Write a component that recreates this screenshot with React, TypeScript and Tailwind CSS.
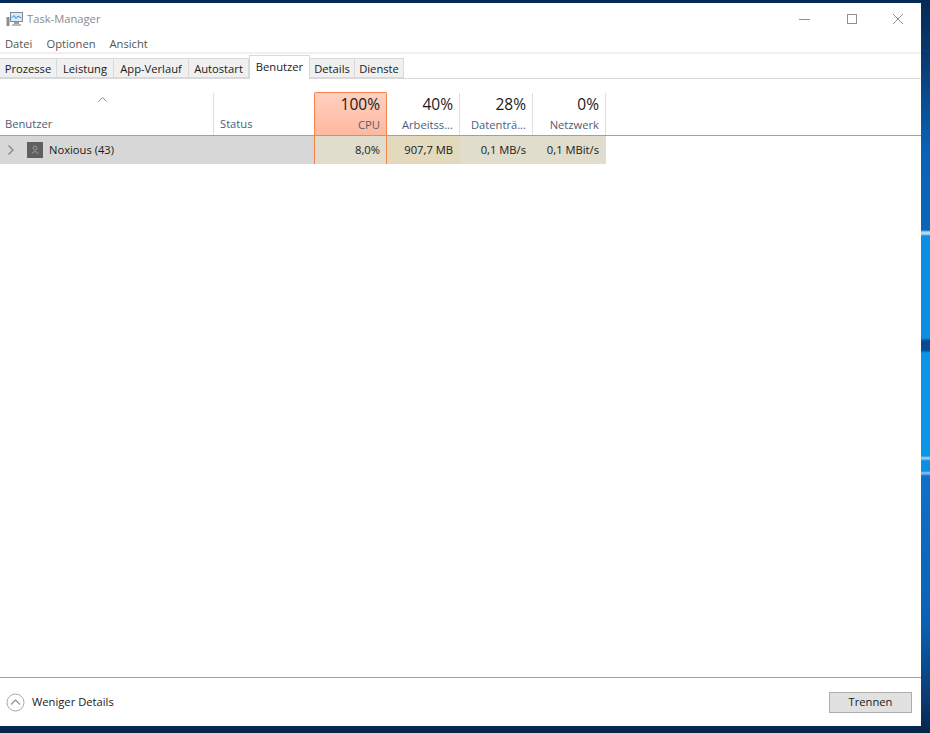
const font = { fontFamily: '"Open Sans", "Noto Sans", sans-serif' }

const tabs = [
  { label: 'Prozesse', width: 'w-[57px]' },
  { label: 'Leistung', width: 'w-[57px]' },
  { label: 'App-Verlauf', width: 'w-[75px]' },
  { label: 'Autostart', width: 'w-[60px]' },
  { label: 'Benutzer', width: 'w-[61px]', active: true },
  { label: 'Details', width: 'w-[45px]' },
  { label: 'Dienste', width: 'w-[49px]' },
]

const columns = [
  { percent: '40%', name: 'Arbeitss...', value: '907,7 MB', cell: 'bg-[#e3d9bd]' },
  { percent: '28%', name: 'Datenträ...', value: '0,1 MB/s', cell: 'bg-[#e0ddcc]' },
  { percent: '0%', name: 'Netzwerk', value: '0,1 MBit/s', cell: 'bg-[#e0ddcc]' },
]

function AppIcon() {
  return (
    <svg width="17" height="16" viewBox="0 0 17 16" className="shrink-0">
      <rect x="0.5" y="6" width="3" height="9" fill="#8a8f94" />
      <rect x="4.5" y="1.5" width="12" height="9" fill="#dcebf5" stroke="#7f8a93" />
      <path d="M5.5 7 L8 4.5 L10 7.5 L12 5 L15.5 7" fill="none" stroke="#2f8fd0" strokeWidth="1" />
      <rect x="8" y="11" width="5" height="2" fill="#9aa0a5" />
      <rect x="6" y="13" width="9" height="2" fill="#b5babd" />
    </svg>
  )
}

export default function App() {
  return (
    <div
      className="flex h-[733px] w-[930px] items-start overflow-hidden bg-[linear-gradient(180deg,#062a55_0px,#0a3a70_60px,#0a62b5_150px,#0a66bb_230px,#b5d8ee_232px,#b5d8ee_234px,#0a8fe2_236px,#0a8fe2_338px,#0a4a90_341px,#0a4a90_350px,#0a96e8_353px,#0a96e8_456px,#b5d8ee_458px,#0a8fe2_461px,#0a8fe2_471px,#9cc8e8_473px,#1070c8_476px,#0a62b5_620px,#0a3a70_700px,#062448_733px)] pt-[3px] text-[11.2px] text-[#1a1a1a]"
      style={font}
    >
      <div className="flex h-[723px] w-[921px] flex-col bg-white">
        <div className="flex h-[32px] shrink-0 items-center pl-[6px]">
          <AppIcon />
          <span className="ml-[4px] text-[#8b8b8b]">Task-Manager</span>
          <div className="ml-auto flex items-center">
            <svg width="12" height="12" viewBox="0 0 12 12" className="mr-[35px]">
              <path d="M0 6.5 H11" stroke="#8f8f8f" />
            </svg>
            <svg width="12" height="12" viewBox="0 0 12 12" className="mr-[34px]">
              <rect x="1.5" y="1.5" width="9" height="9" fill="none" stroke="#8f8f8f" />
            </svg>
            <svg width="12" height="12" viewBox="0 0 12 12" className="mr-[17px]">
              <path d="M1 1 L11 11 M11 1 L1 11" stroke="#8f8f8f" />
            </svg>
          </div>
        </div>
        <div className="flex h-[17px] shrink-0 items-center gap-[14px] pl-[5px] pt-[2px] text-[#555]">
          <span>Datei</span>
          <span>Optionen</span>
          <span>Ansicht</span>
        </div>
        <div className="h-[2px] shrink-0 bg-[#f0f0f0]" />
        <div className="relative flex h-[25px] shrink-0 items-end border-b border-[#d9d9d9]">
          {tabs.map((tab) =>
            tab.active ? (
              <div
                key={tab.label}
                className={`${tab.width} relative z-10 -mb-px flex h-[24px] items-start justify-center border border-b-0 border-[#d9d9d9] bg-white pt-[3px]`}
              >
                {tab.label}
              </div>
            ) : (
              <div
                key={tab.label}
                className={`${tab.width} flex h-[20px] items-center justify-center border-y border-r border-[#d9d9d9] bg-[#f0f0f0] pt-[2px]`}
              >
                {tab.label}
              </div>
            ),
          )}
        </div>
        <div className="flex flex-1 flex-col">
          <div className="flex h-[57px] shrink-0 items-end border-b border-[#a0a0a0] pt-[14px]">
            <div className="relative flex h-[42px] w-[214px] shrink-0 items-end border-r border-[#dedede] pb-[2px] pl-[5px] text-[#4c607a]">
              <svg width="9" height="5" viewBox="0 0 9 5" className="absolute left-[98px] top-[4px]">
                <path d="M0.5 4.5 L4.5 0.5 L8.5 4.5" fill="none" stroke="#8a8a8a" />
              </svg>
              Benutzer
            </div>
            <div className="flex h-[42px] w-[100px] shrink-0 items-end pb-[2px] pl-[6px] text-[#4c607a]">Status</div>
            <div className="-mt-px flex h-[43px] w-[73px] shrink-0 flex-col items-end rounded-t-[2px] border-x border-t border-[#f5854f] bg-[linear-gradient(180deg,#ffd0c0,#ffb89f)] pr-[6px] pt-[1px]">
              <span className="text-[15.5px] leading-[20px] text-[#1a1a1a]">100%</span>
              <span className="mt-[3px] text-[#4c607a]">CPU</span>
            </div>
            {columns.map((column) => (
              <div
                key={column.name}
                className="flex h-[42px] w-[73px] shrink-0 flex-col items-end border-r border-[#dedede] pr-[6px] pt-[1px]"
              >
                <span className="text-[15.5px] leading-[20px] text-[#1a1a1a]">{column.percent}</span>
                <span className="mt-[3px] text-[#4c607a]">{column.name}</span>
              </div>
            ))}
          </div>
          <div className="flex h-[28px] shrink-0 items-center">
            <div className="flex h-full w-[314px] shrink-0 items-center bg-[#d7d7d7] pl-[7px]">
              <svg width="8" height="10" viewBox="0 0 8 10">
                <path d="M1.5 0.5 L6 5 L1.5 9.5" fill="none" stroke="#8a8a8a" strokeWidth="1.4" />
              </svg>
              <div className="ml-[12px] flex h-[16px] w-[16px] items-center justify-center bg-[#5f5f5f]">
                <svg width="8" height="10" viewBox="0 0 8 10">
                  <circle cx="4" cy="3" r="2" fill="none" stroke="#9a9a9a" />
                  <path d="M1 9 C1 6 7 6 7 9" fill="none" stroke="#9a9a9a" />
                </svg>
              </div>
              <span className="ml-[6px]">Noxious (43)</span>
            </div>
            <div className="flex h-full w-[73px] shrink-0 items-center justify-end border-x border-[#f5854f] bg-[#e0ddcc] pr-[6px]">
              8,0%
            </div>
            {columns.map((column) => (
              <div
                key={column.value}
                className={`${column.cell} flex h-full w-[73px] shrink-0 items-center justify-end pr-[7px]`}
              >
                {column.value}
              </div>
            ))}
          </div>
        </div>
        <div className="flex h-[49px] shrink-0 items-center justify-between border-t border-[#a0a0a0] pl-[6px] pr-[9px]">
          <div className="flex items-center gap-[7px]">
            <svg width="19" height="19" viewBox="0 0 19 19">
              <circle cx="9.5" cy="9.5" r="8.5" fill="none" stroke="#a8a8a8" />
              <path d="M5 11.5 L9.5 7 L14 11.5" fill="none" stroke="#9a9a9a" strokeWidth="1.3" />
            </svg>
            <span>Weniger Details</span>
          </div>
          <button
            type="button"
            className="flex h-[21px] w-[83px] items-center justify-center border border-[#adadad] bg-[#e1e1e1]"
          >
            Trennen
          </button>
        </div>
      </div>
    </div>
  )
}
